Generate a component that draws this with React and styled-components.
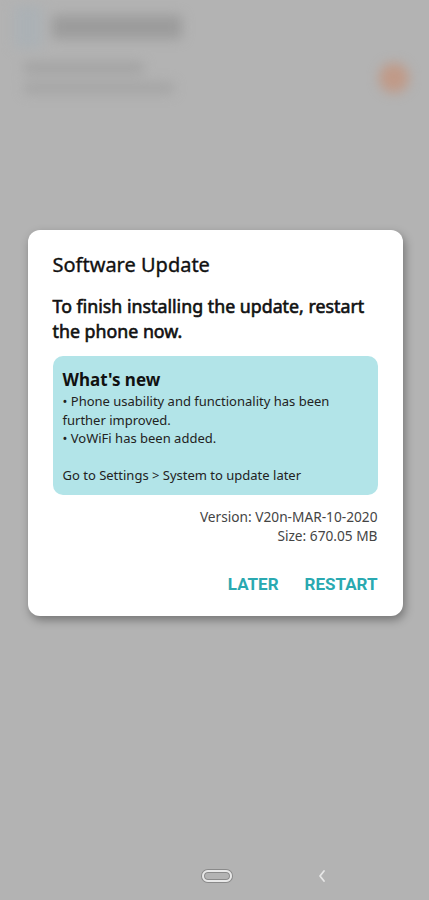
import React from "react";
import styled, { createGlobalStyle } from "styled-components";

const GlobalStyle = createGlobalStyle`
  html, body {
    margin: 0;
    padding: 0;
    background: #b3b3b3;
  }
  body {
    font-family: "Noto Sans", Roboto, "Liberation Sans", sans-serif;
  }
`;

const Screen = styled.div`
  position: relative;
  width: 429px;
  height: 900px;
  overflow: hidden;
  background: #b3b3b3;
  display: flex;
  flex-direction: column;
`;

const BlurredApp = styled.div`
  filter: blur(6px);
  display: flex;
  flex-direction: column;
  gap: 14px;
  padding: 6px 12px 0 14px;
`;

const TopRow = styled.div`
  display: flex;
  align-items: center;
  gap: 10px;
`;

const Tab = styled.div`
  width: 28px;
  height: 42px;
  background: #abb1b5;
`;

const Bar = styled.div`
  width: ${(p) => p.w}px;
  height: ${(p) => p.h}px;
  background: ${(p) => p.c || "#9f9f9f"};
  border-radius: 4px;
`;

const ItemRow = styled.div`
  display: flex;
  align-items: center;
  justify-content: space-between;
  padding: 0 8px 0 10px;
`;

const ItemText = styled.div`
  display: flex;
  flex-direction: column;
  gap: 8px;
`;

const Dot = styled.div`
  width: 30px;
  height: 30px;
  border-radius: 50%;
  background: #c09a88;
`;

const Overlay = styled.div`
  position: absolute;
  inset: 0;
  display: flex;
  justify-content: center;
  padding-top: 230px;
`;

const Dialog = styled.div`
  width: 375px;
  height: 386px;
  box-sizing: border-box;
  margin-left: 1px;
  background: #fff;
  border-radius: 12px;
  box-shadow: 2px 4px 10px rgba(0, 0, 0, 0.35);
  padding: 22px 25px 0 25px;
  display: flex;
  flex-direction: column;
`;

const Title = styled.h2`
  margin: 0;
  font-size: 20px;
  font-weight: 400;
  -webkit-text-stroke: 0.35px #111;
  color: #111;
  line-height: 26px;
`;

const Message = styled.p`
  margin: 16px 0 0;
  font-size: 17.8px;
  font-weight: 400;
  -webkit-text-stroke: 0.6px #111;
  color: #111;
  line-height: 25px;
`;

const NewsBox = styled.div`
  margin-top: 12px;
  background: #b2e4e8;
  border-radius: 10px;
  padding: 12px 10px 11px 10px;
  color: #222;
`;

const NewsTitle = styled.div`
  font-size: 17px;
  font-weight: 700;
  color: #111;
  line-height: 24px;
`;

const NewsLine = styled.div`
  font-size: 13px;
  line-height: 18.5px;
  color: #222;
  margin-top: ${(p) => p.gap || 0}px;
`;

const Meta = styled.div`
  margin-top: 12px;
  text-align: right;
  font-size: 13.7px;
  line-height: 19px;
  color: #444;
`;

const Actions = styled.div`
  margin-top: 28px;
  display: flex;
  justify-content: flex-end;
  gap: 26px;
`;

const ActionButton = styled.button`
  border: 0;
  background: none;
  padding: 0;
  font-family: Roboto, "Noto Sans", sans-serif;
  font-size: 17px;
  font-weight: 700;
  color: #2aa9b1;
  line-height: 22px;
`;

const NavBar = styled.div`
  position: absolute;
  left: 0;
  right: 0;
  bottom: 0;
  height: 48px;
  display: flex;
  align-items: center;
  justify-content: center;
  gap: 85px;
  padding-left: 100px;
  box-sizing: border-box;
`;

const HomePill = styled.div`
  width: 26px;
  height: 8px;
  border: 2px solid #e8e8e8;
  border-radius: 6px;
  box-shadow: 0 0 0 1px #8a8a8a, inset 0 0 0 1px #8a8a8a;
`;

export default function App() {
  return (
    <Screen>
      <GlobalStyle />
      <BlurredApp>
        <TopRow>
          <Tab />
          <Bar w={130} h={24} c="#9c9c9c" />
        </TopRow>
        <ItemRow>
          <ItemText>
            <Bar w={120} h={12} c="#a3a3a3" />
            <Bar w={150} h={12} c="#a5a5a5" />
          </ItemText>
          <Dot />
        </ItemRow>
      </BlurredApp>

      <Overlay>
        <Dialog>
          <Title>Software Update</Title>
          <Message>
            To finish installing the update, restart the phone now.
          </Message>
          <NewsBox>
            <NewsTitle>What's new</NewsTitle>
            <NewsLine>
              • Phone usability and functionality has been further improved.
            </NewsLine>
            <NewsLine>• VoWiFi has been added.</NewsLine>
            <NewsLine gap={18}>Go to Settings &gt; System to update later</NewsLine>
          </NewsBox>
          <Meta>
            Version: V20n-MAR-10-2020
            <br />
            Size: 670.05 MB
          </Meta>
          <Actions>
            <ActionButton>LATER</ActionButton>
            <ActionButton>RESTART</ActionButton>
          </Actions>
        </Dialog>
      </Overlay>

      <NavBar>
        <HomePill />
        <svg width="10" height="14" viewBox="0 0 10 14">
          <path
            d="M7 2 L3 7 L7 12"
            fill="none"
            stroke="#e6e6e6"
            strokeWidth="1.8"
            strokeLinecap="round"
            strokeLinejoin="round"
          />
        </svg>
      </NavBar>
    </Screen>
  );
}
